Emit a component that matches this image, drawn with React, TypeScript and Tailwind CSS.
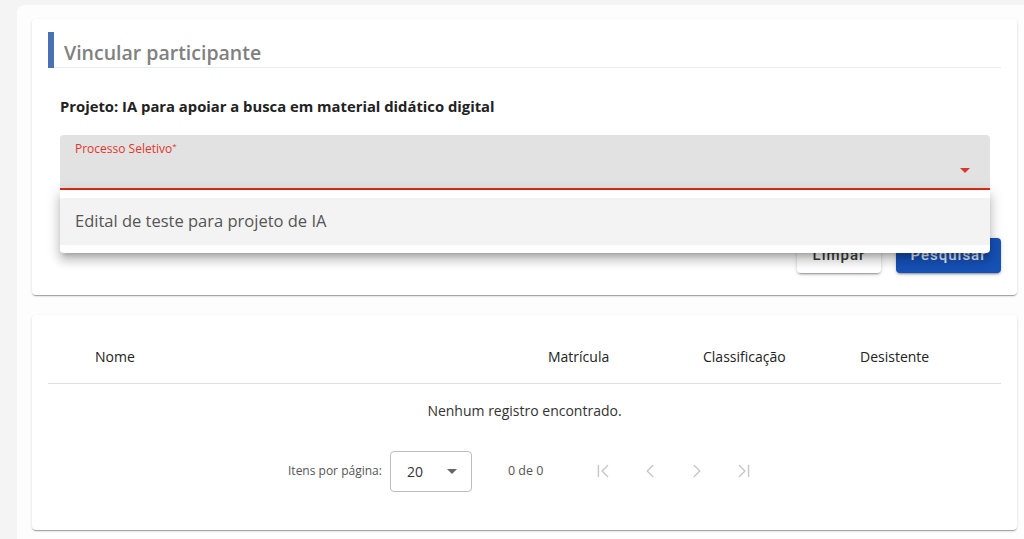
import { ChevronFirst, ChevronLast, ChevronLeft, ChevronRight } from "lucide-react";

const font = { fontFamily: "'Open Sans', Lato, sans-serif" };

function Caret({ className }: { className: string }) {
  return (
    <svg width="10" height="5" viewBox="0 0 10 5" className={className}>
      <path d="M0 0 L5 5 L10 0 Z" fill="currentColor" />
    </svg>
  );
}

export default function App() {
  return (
    <div className="min-h-screen bg-[#f4f4f4] pl-[17px] pt-[5px]" style={font}>
      <div className="bg-[#fdfdfd] rounded-tl-lg pl-[15px] pr-[7px] pt-[14px] pb-[9px] flex flex-col gap-[20px]">
        {/* card with form */}
        <div className="bg-white rounded shadow-[0_2px_1px_-1px_rgba(0,0,0,0.2),0_1px_1px_0_rgba(0,0,0,0.14),0_1px_3px_0_rgba(0,0,0,0.12)] pl-[16px] pr-[16px] pt-[13px] pb-[22px]">
          <div className="border-l-[6px] border-[#4a72b3] h-[36px] flex items-end">
            <div className="flex-1 border-b border-[#e6ebf2] h-full flex items-center pl-[10px] pt-[6px]">
              <span className="text-[19.5px] text-[#808080] font-semibold">Vincular participante</span>
            </div>
          </div>

          <div className="pl-[12px] pr-[11px]">
            <div className="mt-[27px] text-[14.8px] font-bold text-[#222]">
              Projeto: IA para apoiar a busca em material didático digital
            </div>

            <div className="relative mt-[18px]">
              <div className="bg-[#e2e2e2] rounded-t h-[55px] border-b-2 border-[#dc2a1c] px-[15px] pt-[5px] flex flex-col">
                <span className="text-[12px] text-[#e0372a]">
                  Processo Seletivo<span className="text-[8px] align-top">*</span>
                </span>
                <div className="flex justify-end pr-[5px] mt-[10px]">
                  <Caret className="text-[#d9372a]" />
                </div>
              </div>

              {/* open dropdown panel */}
              <div className="absolute left-0 right-0 top-[55px] z-10 bg-white rounded-b py-[8px] shadow-[0_5px_5px_-3px_rgba(0,0,0,0.2),0_8px_10px_1px_rgba(0,0,0,0.14),0_3px_14px_2px_rgba(0,0,0,0.12)]">
                <div className="bg-[#f3f3f3] h-[47px] flex items-center px-[15px] text-[16.5px] text-[#555]">
                  Edital de teste para projeto de IA
                </div>
              </div>
            </div>
          </div>

          <div className="flex justify-end gap-[15px] mt-[48px]" style={{ fontFamily: "Roboto, sans-serif" }}>
            <button className="w-[84px] h-[35px] rounded bg-white text-[#3a3a3a] text-[15px] font-medium tracking-[1px] shadow-[0_3px_1px_-2px_rgba(0,0,0,0.2),0_2px_2px_0_rgba(0,0,0,0.14),0_1px_5px_0_rgba(0,0,0,0.12)]">
              Limpar
            </button>
            <button className="w-[105px] h-[35px] rounded bg-[#1651b6] text-[#e8eefa] text-[15px] font-medium tracking-[1px] shadow-[0_3px_1px_-2px_rgba(0,0,0,0.2),0_2px_2px_0_rgba(0,0,0,0.14),0_1px_5px_0_rgba(0,0,0,0.12)]">
              Pesquisar
            </button>
          </div>
        </div>

        {/* results table */}
        <div className="bg-white rounded shadow-[0_2px_1px_-1px_rgba(0,0,0,0.2),0_1px_1px_0_rgba(0,0,0,0.14),0_1px_3px_0_rgba(0,0,0,0.12)] px-[16px] pt-[21px] pb-[20px]">
          <div className="grid grid-cols-[500px_155px_157px_1fr] h-[48px] pb-[6px] items-center border-b border-[#e0e0e0] text-[14px] text-[#222]">
            <div className="pl-[47px]">Nome</div>
            <div>Matrícula</div>
            <div>Classificação</div>
            <div>Desistente</div>
          </div>
          <div className="h-[52px] flex items-center justify-center text-[14px] text-[#333]">
            Nenhum registro encontrado.
          </div>

          <div className="flex items-center pl-[240px] h-[56px] mt-[7px] text-[12px] text-[#555]">
            <span className="mr-[8px]">Itens por página:</span>
            <div className="w-[82px] h-[41px] border border-[#bdbdbd] rounded flex items-center pl-[16px] pr-[14px] justify-between text-[14px] text-[#333]">
              <span>20</span>
              <Caret className="text-[#666]" />
            </div>
            <span className="ml-[36px] mr-[49px] text-[12.5px]">0 de 0</span>
            <div className="flex items-center gap-[25px] text-[#c8c8c8]">
              <ChevronFirst size={22} strokeWidth={1.6} />
              <ChevronLeft size={22} strokeWidth={1.6} />
              <ChevronRight size={22} strokeWidth={1.6} />
              <ChevronLast size={22} strokeWidth={1.6} />
            </div>
          </div>
          <div className="h-[11px]" />
        </div>
      </div>
    </div>
  );
}
